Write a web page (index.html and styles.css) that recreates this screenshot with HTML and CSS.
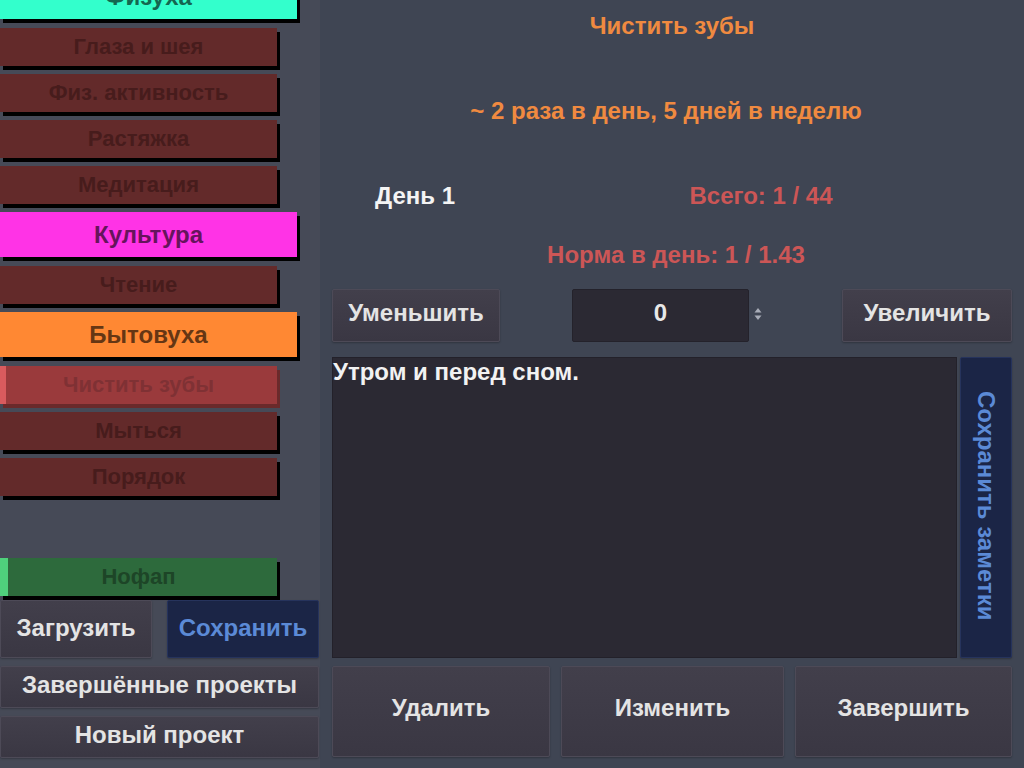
FILE: index.html
```html
<!DOCTYPE html>
<html lang="ru">
<head>
<meta charset="utf-8">
<title>Трекер</title>
<link rel="stylesheet" href="styles.css">
</head>
<body>
<div class="app">
  <aside class="side">
    <div class="list">
      <div class="list-inner">
        <div class="cat cat-cyan">Физуха</div>
        <div class="item">Глаза и шея</div>
        <div class="item">Физ. активность</div>
        <div class="item">Растяжка</div>
        <div class="item">Медитация</div>
        <div class="cat cat-magenta">Культура</div>
        <div class="item">Чтение</div>
        <div class="cat cat-orange">Бытовуха</div>
        <div class="item item-active">Чистить зубы</div>
        <div class="item">Мыться</div>
        <div class="item">Порядок</div>
        <div class="spacer"></div>
        <div class="item item-green">Нофап</div>
      </div>
    </div>
    <div class="actions">
      <div class="act-row">
        <button class="btn btn-load">Загрузить</button>
        <button class="btn btn-save">Сохранить</button>
      </div>
      <button class="btn btn-wide">Завершённые проекты</button>
      <button class="btn btn-wide">Новый проект</button>
    </div>
  </aside>
  <main class="main">
    <div class="title">Чистить зубы</div>
    <div class="sub">~ 2 раза в день, 5 дней в неделю</div>
    <div class="stats">
      <div class="day">День 1</div>
      <div class="total">Всего: 1 / 44</div>
    </div>
    <div class="norm">Норма в день: 1 / 1.43</div>
    <div class="controls">
      <button class="btn btn-dec">Уменьшить</button>
      <div class="counter">
        <div class="num">0</div>
        <svg class="spin" width="8" height="14" viewBox="0 0 8 14"><path d="M4 1 L7.5 5.5 H0.5 Z" fill="#a9adb8"/><path d="M4 13 L7.5 8.5 H0.5 Z" fill="#a9adb8"/></svg>
      </div>
      <button class="btn btn-inc">Увеличить</button>
    </div>
    <div class="notes-row">
      <div class="notes">Утром и перед сном.</div>
      <button class="save-notes">Сохранить заметки</button>
    </div>
    <div class="bottom-row">
      <button class="btn btn-big">Удалить</button>
      <button class="btn btn-big">Изменить</button>
      <button class="btn btn-big">Завершить</button>
    </div>
  </main>
</div>
</body>
</html>
```
FILE: styles.css
```css
* { box-sizing: border-box; }
html, body { margin: 0; padding: 0; }
body {
  width: 1024px;
  height: 768px;
  overflow: hidden;
  background: #3f4553;
  font-family: "Liberation Sans", Arial, sans-serif;
  font-weight: bold;
}
button { font-family: inherit; font-weight: bold; cursor: pointer; }
.app { display: flex; width: 1024px; height: 768px; }

/* sidebar */
.side {
  width: 320px;
  height: 768px;
  background: #464a57;
  display: flex;
  flex-direction: column;
}
.list { height: 600px; overflow: hidden; }
.list-inner { margin-top: -26px; }
.cat {
  width: 297px;
  height: 45px;
  line-height: 45px;
  margin-bottom: 9px;
  text-align: center;
  font-size: 24px;
  box-shadow: 3px 4px 0 #000;
}
.cat-cyan { background: #33ffcc; color: #146650; }
.cat-magenta { background: #ff33e6; color: #66145c; }
.cat-orange { background: #ff8833; color: #663614; }
.item {
  position: relative;
  width: 277px;
  height: 38px;
  line-height: 38px;
  margin-bottom: 8px;
  text-align: center;
  font-size: 22px;
  background: #632a2a;
  color: #471c1c;
  box-shadow: 3px 4px 0 #000;
}
.item-active {
  background: #9a3a3c;
  color: #7f3134;
  box-shadow: 3px 4px 0 #6a2a2b;
  border-left: 6px solid #d95b5e;
  padding-right: 6px;
}
.item-green {
  background: #2d6a3c;
  color: #1d4527;
  border-left: 8px solid #4fd17c;
  padding-right: 8px;
}
.spacer { height: 45px; margin-bottom: 9px; }

.actions {
  width: 319px;
  display: flex;
  flex-direction: column;
  gap: 8px;
}
.act-row { display: flex; justify-content: space-between; height: 58px; }
.btn {
  background: linear-gradient(#423f4b, #3a3743);
  border: 1px solid #4d4a57;
  border-radius: 2px;
  color: #e4e4e4;
  font-size: 24px;
  padding: 0 0 5px;
  box-shadow: 0 1px 2px rgba(0,0,0,0.25);
}
.btn-load { width: 152px; height: 58px; padding-bottom: 3px; }
.btn-save {
  width: 152px;
  height: 58px;
  padding-bottom: 3px;
  background: #1b2546;
  border-color: #26335c;
  color: #5b8ad6;
}
.btn-wide { width: 319px; height: 42px; }

/* main */
.main {
  flex: 1;
  padding: 0 12px;
  display: flex;
  flex-direction: column;
}
.title, .sub, .norm {
  text-align: center;
  color: #f08a40;
  font-size: 24px;
}
.title { height: 52px; line-height: 52px; }
.sub { height: 118px; line-height: 118px; padding-right: 12px; }
.stats {
  height: 52px;
  line-height: 52px;
  display: grid;
  grid-template-columns: 1fr 3fr;
  font-size: 24px;
  text-align: center;
}
.day { color: #f4f4f4; padding-right: 4px; }
.total { color: #cc5656; padding-left: 8px; }
.norm { color: #cc5656; height: 66px; line-height: 66px; padding-left: 8px; }

.controls {
  margin-top: 1px;
  height: 53px;
  display: grid;
  grid-template-columns: 168px 1fr 170px;
}
.btn-dec, .btn-inc { height: 53px; }
.counter {
  display: flex;
  align-items: center;
  justify-content: center;
  gap: 5px;
  padding-right: 8px;
}
.num {
  width: 177px;
  height: 53px;
  line-height: 46px;
  text-align: center;
  background: #2b2933;
  border: 1px solid #24222b;
  border-radius: 2px;
  color: #e8e8e8;
  font-size: 24px;
}
.spin { display: block; margin-top: -3px; }

.notes-row {
  margin-top: 15px;
  height: 301px;
  display: flex;
  gap: 3px;
}
.notes {
  flex: 1;
  background: #2b2933;
  border: 1px solid #23212a;
  color: #f2f2f2;
  font-size: 24px;
  line-height: 28px;
  padding: 0;
}
.save-notes {
  width: 52px;
  height: 301px;
  background: #1b2546;
  border: 1px solid #26335c;
  border-radius: 2px;
  color: #5b8ad6;
  font-size: 24px;
  writing-mode: vertical-rl;
  padding: 0 0 4px;
  box-shadow: 0 1px 2px rgba(0,0,0,0.25);
}

.bottom-row {
  margin-top: 8px;
  height: 91px;
  display: grid;
  grid-template-columns: 218px 223px 217px;
  column-gap: 11px;
}
.btn-big { height: 91px; padding-bottom: 8px; }
```
